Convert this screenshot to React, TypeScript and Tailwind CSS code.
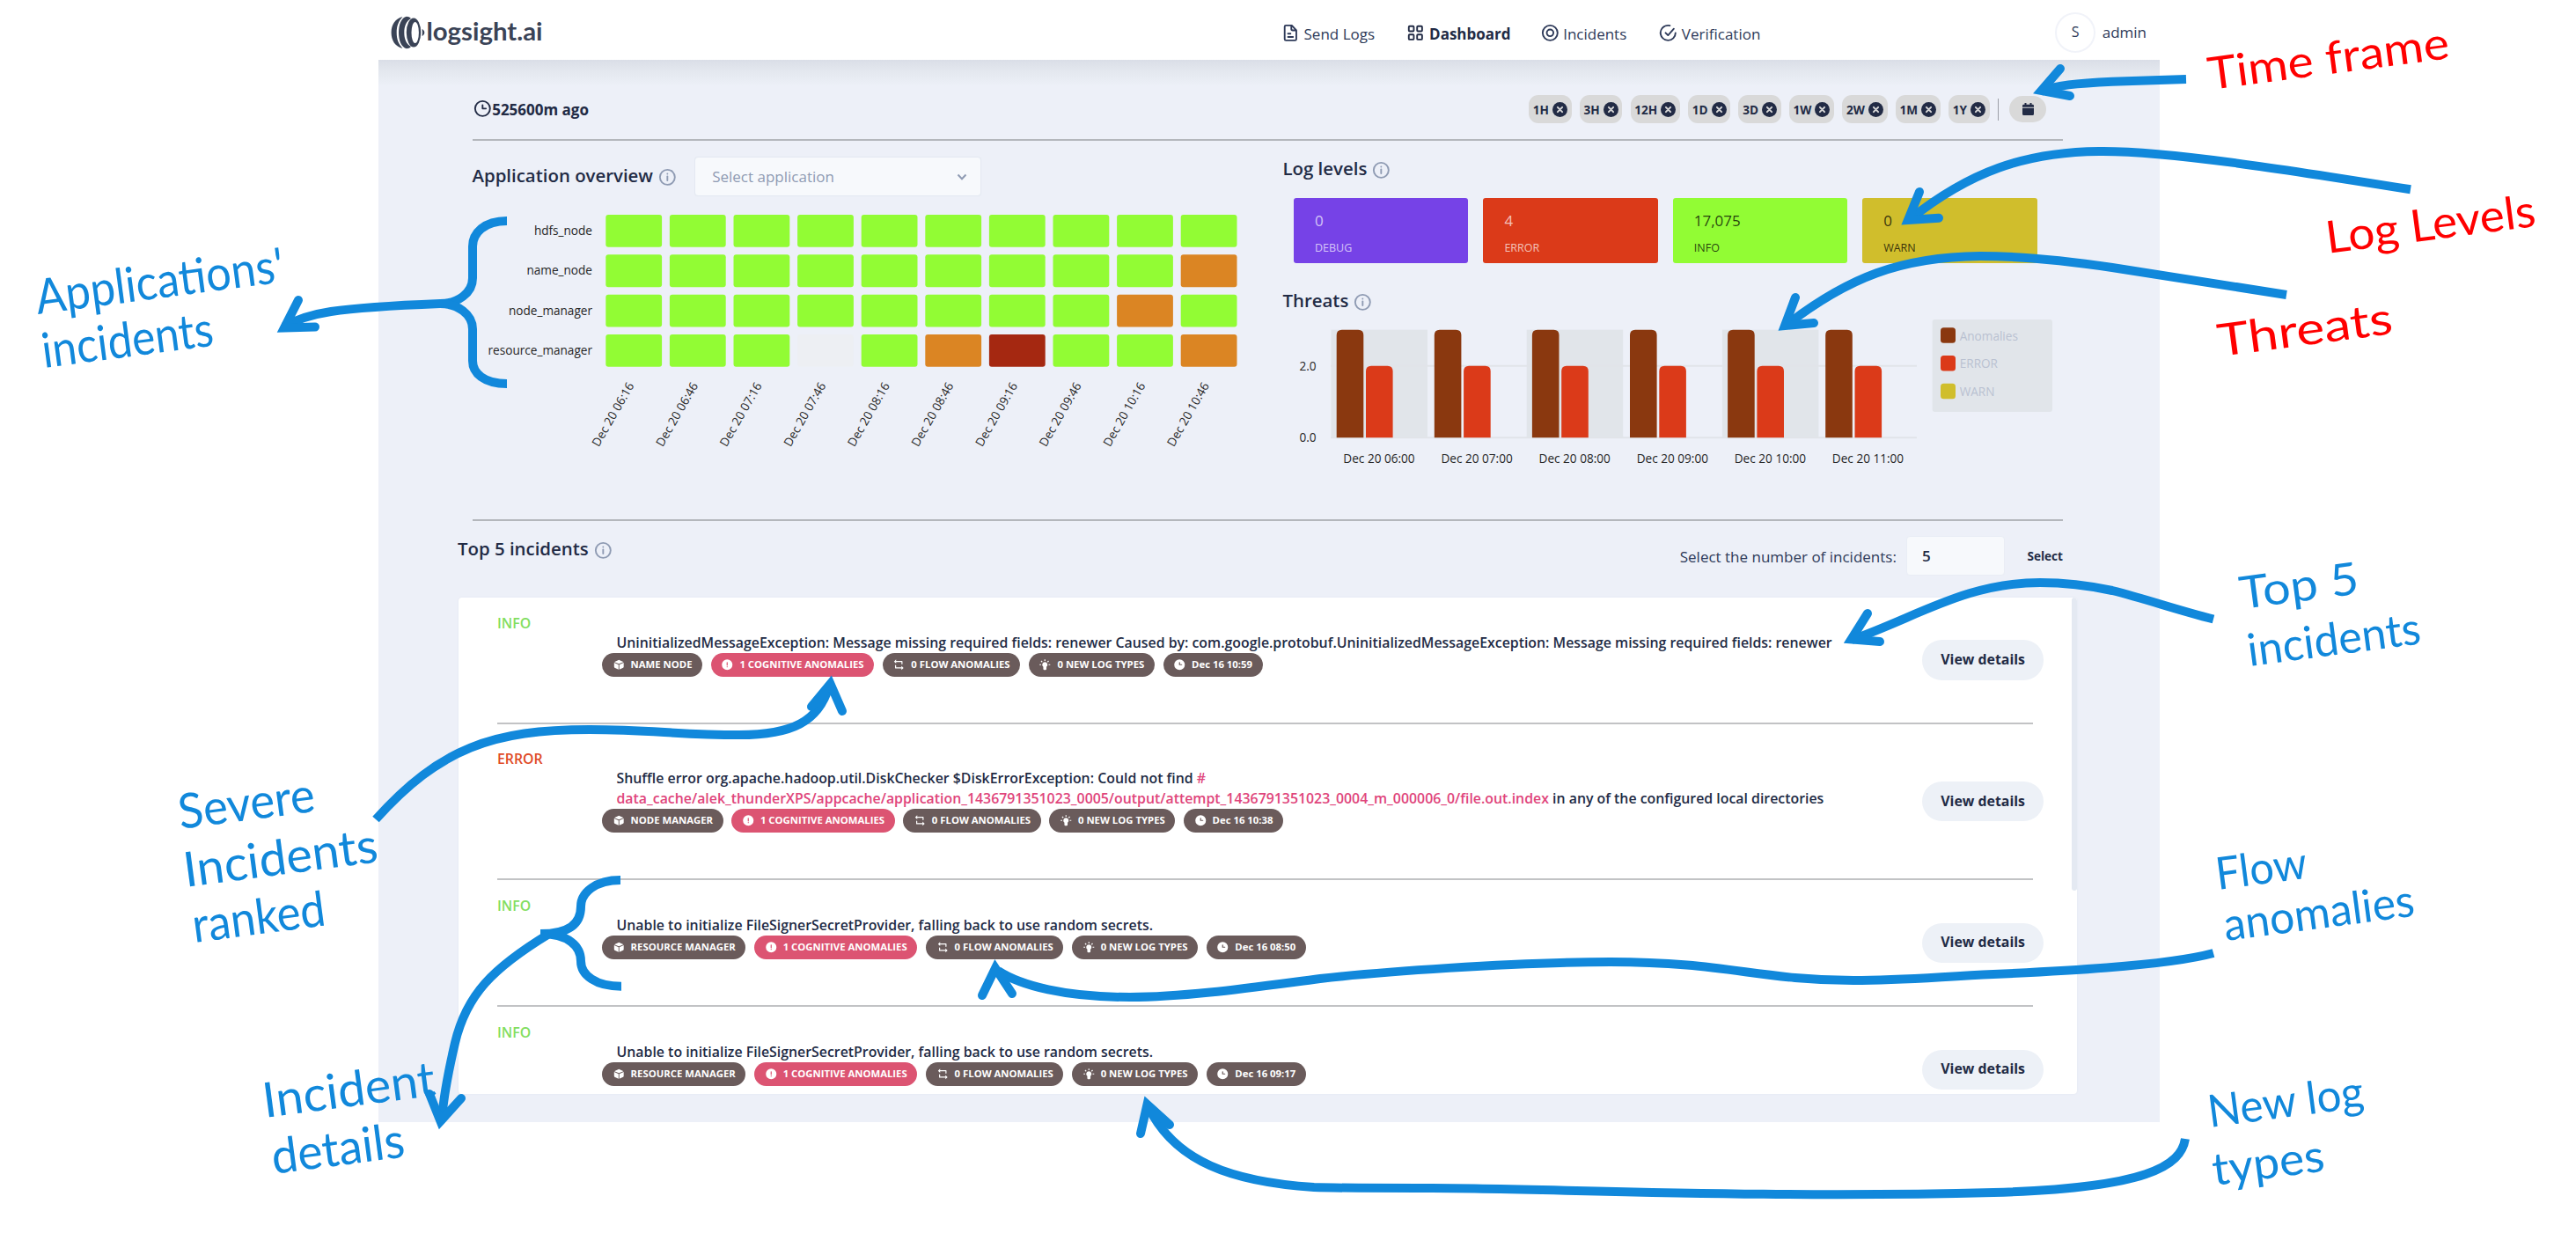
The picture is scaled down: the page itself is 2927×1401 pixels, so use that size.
import React from "react";

const CELL_GREEN = "#92fc34";
const CELL_ORANGE = "#db8523";
const CELL_RED = "#a52811";
const CELL_EMPTY = "#edeff3";
const BLUE = "#1188db";
const RED = "#ff0000";

type IconProps = { className?: string; children: React.ReactNode };

function Icon({ className = "size-[22.67px]", children }: IconProps) {
  return (
    <svg viewBox="0 0 24 24" fill="currentColor" className={`shrink-0 ${className}`}>
      {children}
    </svg>
  );
}

const Ring = ({ r = 9 }: { r?: number }) => (
  <circle cx="12" cy="12" r={r} fill="none" stroke="currentColor" strokeWidth="2" />
);

function InfoIcon() {
  return (
    <Icon className="ml-[5px] mt-[5px] size-[22.67px] text-[#8f9bb3]">
      <Ring />
      <circle cx="12" cy="8" r="1" />
      <path d="M12 10a1 1 0 0 0-1 1v5a1 1 0 0 0 2 0v-5a1 1 0 0 0-1-1z" />
    </Icon>
  );
}

function Title({ children }: { children: React.ReactNode }) {
  return (
    <div className="flex items-center text-[20.4px] font-semibold leading-[28px] text-[#222b45]">
      {children}
      <InfoIcon />
    </div>
  );
}

function Logo() {
  return (
    <svg viewBox="445 15 176 44" className="h-[44px] w-[176px] overflow-visible" fill="#3a4356">
      <path d="M457.500 19C449 21 444.600 28 444.600 37S449 53 457.500 55C453 50 450.700 45 450.700 37S453 24 457.500 19z" />
      <path d="M462 18.800C456 20 453 28 453 37S456 54 462 55.200C464 55.200 465.500 54.500 467 53C461.500 50 459.300 44 459.300 37S461.500 24 467 21C465.500 19.500 464 18.800 462 18.800z" />
      <path
        fillRule="evenodd"
        d="M470 20.500a8.200 16.500 0 1 0 0 33a8.200 16.500 0 1 0 0-33zM471.700 25a4.200 12 0 1 1 0 24a4.200 12 0 1 1 0-24z"
      />
      <path d="M479.500 33c1.900 1 2.800 2.300 2.800 4s-.9 3-2.800 4q.8-4 0-8z" />
      <text
        x="484.500"
        y="46"
        fontFamily="Lato, sans-serif"
        fontWeight="700"
        fontSize="28"
        textLength="132"
        lengthAdjust="spacingAndGlyphs"
      >
        logsight.ai
      </text>
    </svg>
  );
}

function Header() {
  return (
    <header className="flex h-[68px] items-center bg-white pl-[15px] pr-[15px] pt-[6px] text-[17px] leading-[23px] text-[#2e3a59]">
      <Logo />
      <nav className="ml-[834.4px] grid grid-cols-[141.5px_153.1px_133.7px_auto] [&>div]:flex [&>div]:items-center [&>div]:gap-[3.5px] [&_span]:mt-[2.5px]">
        <div>
          <Icon>
            <path d="M15 16H9a1 1 0 0 0 0 2h6a1 1 0 0 0 0-2z" />
            <path d="M9 14h3a1 1 0 0 0 0-2H9a1 1 0 0 0 0 2z" />
            <path d="M19.740 8.330l-5.440-6a1 1 0 0 0-.74-.33h-7A2.530 2.530 0 0 0 4 4.500v15A2.530 2.530 0 0 0 6.560 22h10.880A2.530 2.530 0 0 0 20 19.500V9a1 1 0 0 0-.26-.67zM14 5l2.740 3h-2a.79.79 0 0 1-.74-.85zm3.440 15H6.560a.53.53 0 0 1-.56-.5v-15a.53.53 0 0 1 .56-.5H12v3.150A2.790 2.790 0 0 0 14.710 10H18v9.500a.53.53 0 0 1-.56.5z" />
          </Icon>
          <span>Send Logs</span>
        </div>
        <div className="font-bold text-[#222b45]">
          <Icon>
            <g fill="none" stroke="currentColor" strokeWidth="2">
              <rect x="4" y="4" width="6" height="6" rx="1" />
              <rect x="14" y="4" width="6" height="6" rx="1" />
              <rect x="4" y="14" width="6" height="6" rx="1" />
              <rect x="14" y="14" width="6" height="6" rx="1" />
            </g>
          </Icon>
          <span className="ml-px">Dashboard</span>
        </div>
        <div>
          <Icon>
            <Ring />
            <Ring r={4} />
          </Icon>
          <span>Incidents</span>
        </div>
        <div>
          <Icon>
            <path d="M9.710 11.290a1 1 0 0 0-1.420 1.420l3 3A1 1 0 0 0 12 16a1 1 0 0 0 .72-.34l7-8a1 1 0 0 0-1.500-1.320L12 13.540z" />
            <path d="M21 11a1 1 0 0 0-1 1 8 8 0 0 1-8 8A8 8 0 0 1 6.330 6.360 7.930 7.930 0 0 1 12 4a8.790 8.790 0 0 1 1.900.22 1 1 0 1 0 .47-1.940A10.540 10.540 0 0 0 12 2a10 10 0 0 0-7 17.090A9.930 9.930 0 0 0 12 22a10 10 0 0 0 10-10 1 1 0 0 0-1-1z" />
          </Icon>
          <span className="ml-px">Verification</span>
        </div>
      </nav>
      <div className="ml-auto flex items-center">
        <div className="flex size-[45.3px] items-center justify-center rounded-full border-2 border-[#f1f3f9] text-[16px]">S</div>
        <span className="ml-[8px]">admin</span>
      </div>
    </header>
  );
}

const ranges = ["1H", "3H", "12H", "1D", "3D", "1W", "2W", "1M", "1Y"];

function TimeBar() {
  return (
    <div className="flex h-[90px] items-center pt-[22px] text-[#222b45]">
      <Icon className="mb-[2px] size-[22.67px]">
        <Ring />
        <path d="M16 11h-3V8a1 1 0 0 0-2 0v4a1 1 0 0 0 1 1h4a1 1 0 0 0 0-2z" />
      </Icon>
      <span className="mt-[2px] text-[17px] font-bold">525600m ago</span>
      <div className="ml-auto flex items-center gap-[9.2px]">
        {ranges.map((r) => (
          <div key={r} className="flex h-[32px] items-center gap-[4px] rounded-[11px] bg-[#d9d9d9] px-[4.700px] text-[13.6px] font-bold">
            <span className="mt-[3px]">{r}</span>
            <svg viewBox="0 0 17 17" className="size-[17px]">
              <circle cx="8.5" cy="8.5" r="8.5" fill="#222b45" />
              <path d="M5.900 5.900l5.200 5.200M11.100 5.900l-5.200 5.200" stroke="#d9d9d9" strokeWidth="2" strokeLinecap="round" />
            </svg>
          </div>
        ))}
        <div className="h-[25px] w-px bg-[#9b9ea6]" />
        <div className="ml-[3px] mr-[19px] flex h-[30px] w-[42px] items-center justify-center rounded-full bg-[#d9d9d9]">
          <svg viewBox="0 0 13 14" className="h-[14px] w-[13px]" fill="#222b45">
            <path d="M0 4.800V3.200Q0 1.800 1.500 1.800h1V0h2v1.800h4V0h2v1.800h1Q13 1.800 13 3.200v1.600zM0 5.800h13v6.700Q13 14 11.500 14h-10Q0 14 0 12.500z" />
          </svg>
        </div>
      </div>
    </div>
  );
}

const apps = ["hdfs_node", "name_node", "node_manager", "resource_manager"];
const slots = ["06:16", "06:46", "07:16", "07:46", "08:16", "08:46", "09:16", "09:46", "10:16", "10:46"];
const cellRows = ["gggggggggg", "gggggggggo", "ggggggggog", "ggg-gorggo"];
const cellFill: Record<string, string> = { g: CELL_GREEN, o: CELL_ORANGE, r: CELL_RED, "-": CELL_EMPTY };

function HeatMap() {
  return (
    <svg viewBox="536.5 223 880 300" className="h-[300px] w-[880px]" fontSize="13.6" fill="#262626">
      {cellRows.map((row, y) => (
        <g key={apps[y]}>
          <text x="672.5" y={267 + y * 45.35} textAnchor="end">
            {apps[y]}
          </text>
          {row.split("").map((c, x) => (
            <rect key={x} x={687.8 + x * 72.6} y={244 + y * 45.35} width="63.8" height="36.8" rx="3" fill={cellFill[c]} />
          ))}
        </g>
      ))}
      {slots.map((s, i) => {
        const x = 720.5 + i * 72.6;
        return (
          <text key={s} x={x} y="438" textAnchor="end" transform={`rotate(-60 ${x} 438)`}>
            Dec 20 {s}
          </text>
        );
      })}
    </svg>
  );
}

function ThreatsChart() {
  const step = 111.1;
  return (
    <svg viewBox="1458 363 886 170" className="h-[170px] w-[886px]" fontSize="13.6" fill="#262626">
      {[0, 2, 4].map((i) => (
        <rect key={i} x={1512.5 + i * step} y="374.7" width="109.5" height="122.600" fill="#e1e5ea" />
      ))}
      <path d="M1512 415.700H2178M1512 497.300H2178" stroke="#e1e4e9" strokeWidth="2" />
      <text x="1495.500" y="420.500" textAnchor="end">2.0</text>
      <text x="1495.500" y="502" textAnchor="end">0.0</text>
      {["06", "07", "08", "09", "10", "11"].map((h, i) => {
        const x = 1518.7 + i * step;
        return (
          <g key={h}>
            <path d={`M${x} 497.300v-116.600q0 -6 6 -6h18.600q6 0 6 6v116.600z`} fill="#8a380f" />
            <path d={`M${x + 33.3} 497.300v-75.600q0 -6 6 -6h18.600q6 0 6 6v75.600z`} fill="#db3a19" />
            <text x={1567 + i * step} y="526" textAnchor="middle">
              Dec 20 {h}:00
            </text>
          </g>
        );
      })}
      <rect x="2195.6" y="363" width="136.400" height="105" rx="3" fill="#e1e5ea" />
      {[
        ["Anomalies", "#8a380f"],
        ["ERROR", "#db3a19"],
        ["WARN", "#d0be2c"],
      ].map(([name, color], i) => (
        <g key={name}>
          <rect x="2205" y={372.300 + i * 31.700} width="17" height="17.500" rx="3.500" fill={color} />
          <text x="2226.700" y={386.700 + i * 31.700} fill="#b9c1d1">
            {name}
          </text>
        </g>
      ))}
    </svg>
  );
}

const levels = [
  { name: "DEBUG", value: "0", cls: "bg-[#7642e7] text-white/70" },
  { name: "ERROR", value: "4", cls: "bg-[#db3a19] text-white/70" },
  { name: "INFO", value: "17,075", cls: "bg-[#92fc34] text-black/75" },
  { name: "WARN", value: "0", cls: "bg-[#d0be2c] text-black/75" },
];

function Overview() {
  return (
    <div className="flex h-[430px]">
      <section className="w-[921px]">
        <div className="flex h-[63px] items-center pt-[18px]">
          <div className="mb-[3.500px]">
            <Title>Application overview</Title>
          </div>
          <div className="ml-[19px] flex h-[45px] w-[326px] items-center justify-between rounded-[4px] border border-[#e4e9f2] bg-[#f7f9fc] px-[19.500px] text-[17px] text-[#8f9bb3] shadow-[0_0_1px_#e4e9f2]">
            Select application
            <svg viewBox="0 0 12 8" className="-mr-[5px] h-[8px] w-[12px]" fill="none" stroke="#8f9bb3" strokeWidth="2">
              <path d="M1.500 1.500L6 6.200L10.500 1.500" />
            </svg>
          </div>
        </div>
        <HeatMap />
      </section>
      <section className="flex-1">
        <div className="flex h-[62px] items-center">
          <Title>Log levels</Title>
        </div>
        <div className="ml-[12.500px] flex gap-[17px] pt-[3px]">
          {levels.map((l) => (
            <div key={l.name} className={`flex h-[74px] w-[198.400px] shrink-0 flex-col rounded-[3px] pl-[24px] ${l.cls}`}>
              <div className="mt-[14px] h-[23px] text-[17px] leading-[23px]">{l.value}</div>
              <div className="mt-[9px] text-[12.500px] leading-[21px]">{l.name}</div>
            </div>
          ))}
        </div>
        <div className="flex h-[64px] items-center pt-[20px]">
          <Title>Threats</Title>
        </div>
        <ThreatsChart />
      </section>
    </div>
  );
}

function Cube() {
  return (
    <Icon className="size-[14.500px]">
      <path d="M11.250 11.830L3 8.360v7.730a1.690 1.690 0 0 0 1 1.520L11.190 21h.06zM12 10.500l8.510-3.570a1.620 1.620 0 0 0-.51-.38l-7.200-3.370a1.870 1.870 0 0 0-1.600 0L4 6.550a1.620 1.620 0 0 0-.51.38zM12.750 11.830V21h.05l7.200-3.390a1.690 1.690 0 0 0 1-1.510V8.360z" />
    </Icon>
  );
}
function Alert() {
  return (
    <Icon className="size-[14.500px]">
      <path fillRule="evenodd" d="M12 2a10 10 0 1 0 0 20 10 10 0 0 0 0-20zm0 15a1 1 0 1 1 0-2 1 1 0 0 1 0 2zm1-4a1 1 0 0 1-2 0V8a1 1 0 0 1 2 0z" />
    </Icon>
  );
}
function Flow() {
  return (
    <Icon className="size-[14.500px]">
      <path d="M7 2L3 6l4 4V7h10v3.500a1 1 0 0 0 2 0V6a1 1 0 0 0-1-1H7zM17 22l4-4-4-4v3H7v-3.500a1 1 0 0 0-2 0V18a1 1 0 0 0 1 1h11z" />
    </Icon>
  );
}
function Bulb() {
  return (
    <Icon className="size-[14.500px]">
      <path d="M12 7a5 5 0 0 0-3 9v4a2 2 0 0 0 2 2h2a2 2 0 0 0 2-2v-4a5 5 0 0 0-3-9zM11 2h2v3h-2zM2 11h3v2H2zM19 11h3v2h-3zM4.200 5.600l1.400-1.400 2.100 2.100-1.400 1.400zM18.400 4.200l1.400 1.400-2.100 2.100-1.400-1.400z" />
    </Icon>
  );
}
function Clock() {
  return (
    <Icon className="size-[14.500px]">
      <path fillRule="evenodd" d="M12 2a10 10 0 1 0 0 20 10 10 0 0 0 0-20zm4 11h-4a1 1 0 0 1-1-1V8a1 1 0 0 1 2 0v3h3a1 1 0 0 1 0 2z" />
    </Icon>
  );
}

function Badge({ icon, children, pink }: { icon: React.ReactNode; children: React.ReactNode; pink?: boolean }) {
  return (
    <span
      className={`flex h-[27.200px] items-center gap-[6.500px] whitespace-nowrap rounded-full pl-[11.600px] pr-[11.600px] text-[11.330px] font-bold text-white ${
        pink ? "bg-[#dc5472]" : "bg-[#6a5b5b]"
      }`}
    >
      {icon}
      {children}
    </span>
  );
}

type Incident = { level: "INFO" | "ERROR"; app: string; time: string; message: React.ReactNode; tall?: boolean };

const secretMessage = "Unable to initialize FileSignerSecretProvider, falling back to use random secrets.";

const incidents: Incident[] = [
  {
    level: "INFO",
    app: "NAME NODE",
    time: "Dec 16 10:59",
    message:
      "UninitializedMessageException: Message missing required fields: renewer Caused by: com.google.protobuf.UninitializedMessageException: Message missing required fields: renewer",
  },
  {
    level: "ERROR",
    app: "NODE MANAGER",
    time: "Dec 16 10:38",
    tall: true,
    message: (
      <>
        Shuffle error org.apache.hadoop.util.DiskChecker $DiskErrorException: Could not find <span className="text-[#e0457b]">#</span>
        <br />
        <span className="text-[#e0457b]">
          data_cache/alek_thunderXPS/appcache/application_1436791351023_0005/output/attempt_1436791351023_0004_m_000006_0/file.out.index
        </span>{" "}
        in any of the configured local directories
      </>
    ),
  },
  { level: "INFO", app: "RESOURCE MANAGER", time: "Dec 16 08:50", message: secretMessage },
  { level: "INFO", app: "RESOURCE MANAGER", time: "Dec 16 09:17", message: secretMessage },
];

function IncidentRow({ item }: { item: Incident }) {
  return (
    <>
      <div className={`flex shrink-0 ${item.tall ? "h-[175.300px]" : "h-[142px]"}`}>
        <div
          className={`w-[119px] text-[15.870px] font-semibold leading-[24px] ${item.tall ? "pt-[27px]" : "pt-[17px]"} ${
            item.level === "INFO" ? "text-[#83de61]" : "text-[#e04a26]"
          }`}
        >
          {item.level}
        </div>
        <div className={`w-[1500.300px] ${item.tall ? "pt-[50.300px]" : "pt-[40px]"}`}>
          <p className="whitespace-nowrap pl-[16.500px] text-[15.870px] font-semibold leading-[22.670px] text-[#222b45]">{item.message}</p>
          <div className="flex gap-[9.700px]">
            <Badge icon={<Cube />}>{item.app}</Badge>
            <Badge icon={<Alert />} pink>
              1 COGNITIVE ANOMALIES
            </Badge>
            <Badge icon={<Flow />}>0 FLOW ANOMALIES</Badge>
            <Badge icon={<Bulb />}>0 NEW LOG TYPES</Badge>
            <Badge icon={<Clock />}>{item.time}</Badge>
          </div>
        </div>
        <button className="h-[45.300px] w-[137.700px] self-center rounded-[22.600px] bg-[#edf1f7] text-[15.870px] font-bold text-[#222b45]">
          View details
        </button>
      </div>
      <div className="h-[2px] w-[1745px] shrink-0 bg-[#c2c3c5]" />
    </>
  );
}

function Incidents() {
  return (
    <>
      <div className="ml-[90px] mr-[110px] flex h-[87px] items-start justify-between pt-[17px] text-[#222b45]">
        <Title>Top 5 incidents</Title>
        <div className="flex items-center text-[17px]">
          <span className="mt-[2px] text-[#2e3a59]">Select the number of incidents:</span>
          <div className="ml-[11px] flex h-[45.300px] w-[112.500px] items-center rounded-[4px] border border-[#e9edf5] bg-[#f7f9fc] pl-[17px] pt-px font-semibold">5</div>
          <span className="ml-[25px] mt-[2px] text-[13.600px] font-bold">Select</span>
        </div>
      </div>
      <div className="ml-[91px] flex h-[564px] w-[1839px] overflow-hidden rounded-[4px] bg-white shadow-[0_0_2px_#dfe4ee]">
        <div className="flex w-[1833px] flex-col overflow-hidden pl-[44px]">
          {incidents.map((item, i) => (
            <IncidentRow key={i} item={item} />
          ))}
        </div>
        <div className="h-[333px] w-[6px] rounded-[3px] bg-[#e4e9f2]" />
      </div>
    </>
  );
}

const shafts = [
  "M2484 90L2400 92.700C2360 94.500 2335 97 2319 104",
  "M2739 215.300C2600 193 2460 171 2385 172C2300 173 2238 195 2169 250",
  "M2598 335L2400 304C2340 295 2290 291 2250 291C2160 292 2100 315 2029 370",
  "M2515 703.500C2470 692 2440 681 2400 671C2372 665 2340 662 2318 662C2235 662 2180 700 2104 727",
  "M2515 1083C2460 1098 2330 1104 2265 1107C2200 1110 2160 1114 2106 1114C2000 1114 1960 1093 1830 1093C1720 1093 1560 1105 1500 1112C1430 1121 1350 1133 1284 1133C1210 1133 1160 1120 1134 1103",
  "M2483 1294C2478 1325 2440 1350 2265 1355C2000 1362 1750 1350 1627 1350C1560 1350 1520 1350 1493 1349C1400 1343 1335 1320 1305 1258",
  "M427 931C500 850 560 829 670 829C740 829 770 835 840 835C900 835 930 820 942 780",
  "M576 251C550 251 537 265 537 280V316C537 333 520 345 500 345C450 347 410 349 376 354C350 358 335 364 323 371",
  "M500 345C520 345 537 357 537 374V410C537 424 550 436 576 436",
  "M705 1000C677 1000 660 1014 660 1030C660 1050 646 1061 614 1061C646 1061 660 1075 660 1092C660 1108 677 1120.700 706 1120.700",
  "M624 1061C560 1100 530 1130 517 1185C510 1215 504 1245 502 1272",
];

const heads = [
  "M2341 78L2319.500 103L2352 109",
  "M2181 218L2168 250L2203 247.700",
  "M2040 338L2028 370L2061 367",
  "M2122 697L2103.500 726.500L2136 729",
  "M1116 1131L1131 1100L1150 1129",
  "M1296 1288L1303.500 1255L1329 1278",
  "M922 803L943.500 777L957 808",
  "M339 341L323 372.500L358 371.500",
  "M488 1243L500.500 1274L524 1248",
];

type Note = [string, number, number, number, string, number];
const notes: Note[] = [
  ["Applications'", 43, 357, 284, BLUE, 55],
  ["incidents", 50, 418, 196, BLUE, 55],
  ["Severe", 205, 942, 156, BLUE, 55],
  ["Incidents", 211, 1008, 222, BLUE, 55],
  ["ranked", 221, 1071, 152, BLUE, 55],
  ["Incident", 301, 1270, 197, BLUE, 55],
  ["details", 311, 1334, 152, BLUE, 55],
  ["Time frame", 2511, 102, 276, RED, 51],
  ["Log Levels", 2645, 288, 240, RED, 51],
  ["Threats", 2522, 405, 200, RED, 51],
  ["Top 5", 2547, 692, 136, BLUE, 51],
  ["incidents", 2556, 757, 198, BLUE, 51],
  ["Flow", 2520, 1011, 104, BLUE, 51],
  ["anomalies", 2529, 1069, 218, BLUE, 51],
  ["New log", 2511, 1281, 178, BLUE, 51],
  ["types", 2516, 1347, 128, BLUE, 51],
];

function Annotations() {
  return (
    <svg viewBox="0 0 2927 1401" className="pointer-events-none absolute inset-0 h-[1401px] w-[2927px]">
      <g fill="none" stroke={BLUE} strokeWidth="10">
        {shafts.map((d) => (
          <path key={d} d={d} />
        ))}
        {heads.map((d) => (
          <path key={d} d={d} strokeLinecap="round" strokeLinejoin="miter" />
        ))}
      </g>
      <g fontFamily="Lato, 'Open Sans', sans-serif">
        {notes.map(([label, x, y, w, color, size]) => (
          <text
            key={label + x}
            x={x}
            y={y}
            fill={color}
            fontSize={size}
            textLength={w}
            lengthAdjust="spacingAndGlyphs"
            transform={`rotate(-7.500 ${x} ${y})`}
          >
            {label}
          </text>
        ))}
      </g>
    </svg>
  );
}

export default function App() {
  return (
    <div className="relative h-[1401px] w-[2927px] overflow-hidden bg-white font-['Open_Sans',sans-serif]">
      <div className="ml-[430px] h-[1275px] w-[2024px] bg-[#edf0f8]">
        <Header />
        <div className="bg-[linear-gradient(to_bottom,#dadee7_0px,#e3e7ee_12px,#edf0f8_30px)]">
          <div className="ml-[106.500px] mr-[110px]">
            <TimeBar />
            <div className="h-[2px] bg-[#b4b7bc]" />
            <Overview />
            <div className="h-[2px] bg-[#b4b7bc]" />
          </div>
        </div>
        <Incidents />
      </div>
      <Annotations />
    </div>
  );
}
